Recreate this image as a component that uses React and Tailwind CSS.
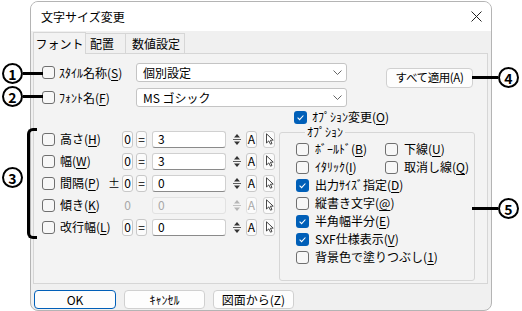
import React from "react";

const FONT = "font-['Noto_Sans_CJK_JP','Noto_Sans',sans-serif]";

function Acc({ children }) {
  return <span className="underline underline-offset-[2px]">{children}</span>;
}

function Check({ checked = false }) {
  if (checked) {
    return (
      <span className="flex items-center justify-center w-[13px] h-[13px] rounded-[3px] bg-[#005fb8] shrink-0">
        <svg width="9" height="9" viewBox="0 0 9 9">
          <path d="M1.6 4.7 L3.6 6.6 L7.4 2.5" fill="none" stroke="white" strokeWidth="1.1" />
        </svg>
      </span>
    );
  }
  return <span className="block w-[13px] h-[13px] rounded-[3px] border border-[#6f6f6f] bg-[#f7f7f7] shrink-0" />;
}

function Chevron() {
  return (
    <svg width="9" height="5" viewBox="0 0 9 5">
      <path d="M0.5 0.5 L4.5 4.5 L8.5 0.5" fill="none" stroke="#555" strokeWidth="0.9" />
    </svg>
  );
}

function Combo({ text }) {
  return (
    <div className="flex items-center justify-between w-[211px] h-[19px] bg-white border border-[#c4c4c4] rounded-[3px] pl-[6px] pr-[4px] text-[12px] leading-none">
      <span>{text}</span>
      <Chevron />
    </div>
  );
}

function Btn({ children, primary = false, className = "" }) {
  return (
    <div
      className={
        "flex items-center justify-center h-[19px] rounded-[4px] bg-[#fdfdfd] leading-none whitespace-nowrap " +
        (primary ? "border-[1.5px] border-[#005fb8] " : "border border-[#d0d0d0] ") +
        className
      }
    >
      {children}
    </div>
  );
}

function Tiny({ children, disabled = false }) {
  return (
    <div
      className={
        "flex items-center justify-center w-[11px] h-[17px] rounded-[3px] border bg-[#fbfbfb] text-[12px] leading-none " +
        (disabled ? "border-[#e0e0e0] text-[#a8a8a8]" : "border-[#c8c8c8] text-black")
      }
    >
      {children}
    </div>
  );
}

function Spinner({ disabled = false }) {
  const c = disabled ? "#b5b5b5" : "#333";
  return (
    <div className="flex items-center justify-center w-[12px] h-[17px]">
      <svg width="10" height="15" viewBox="0 0 10 15">
        <path d="M5 2 L8 5.5 L2 5.5 Z" fill={c} />
        <path d="M1 7.5 L9 7.5" stroke={c} strokeWidth="0.8" />
        <path d="M2 9.5 L8 9.5 L5 13 Z" fill={c} />
      </svg>
    </div>
  );
}

function Pointer() {
  return (
    <div className="flex items-center justify-center w-[12px] h-[17px] rounded-[3px] border border-[#d0d0d0] bg-[#fbfbfb]">
      <svg width="9" height="12" viewBox="0 0 9 12">
        <path d="M1.5 0.8 L1.5 10 L3.8 7.9 L5.5 11.2 L7 10.5 L5.4 7.3 L8.2 7.1 Z" fill="white" stroke="#333" strokeWidth="0.9" strokeLinejoin="round" />
      </svg>
    </div>
  );
}

function ValueRow({ label, acc, pm = false, value, disabled = false }) {
  return (
    <div className="flex items-center h-[22px]">
      <Check />
      <div className="ml-[5px] w-[48px] text-[12px] leading-none whitespace-nowrap">
        {label}(<Acc>{acc}</Acc>)
      </div>
      <div className="w-[14px] text-[12px] leading-none">{pm ? "±" : ""}</div>
      {disabled ? (
        <div className="w-[11px] text-center text-[12px] leading-none text-[#a8a8a8]">0</div>
      ) : (
        <Tiny>0</Tiny>
      )}
      <div className="ml-[3px]">
        {disabled ? <div className="w-[11px] h-[17px]" /> : <Tiny>=</Tiny>}
      </div>
      <div
        className={
          "ml-[5px] flex items-center w-[74px] h-[17px] rounded-[3px] border pl-[5px] text-[12px] leading-none " +
          (disabled
            ? "bg-[#f5f5f5] border-[#e2e2e2] text-[#a8a8a8]"
            : "bg-white border-[#d0d0d0] border-b-[#8a8a8a] text-black")
        }
      >
        {value}
      </div>
      <div className="ml-[5px]">
        <Spinner disabled={disabled} />
      </div>
      <div className="ml-[3px]">
        <Tiny disabled={disabled}>A</Tiny>
      </div>
      <div className="ml-[6px]">
        <Pointer />
      </div>
    </div>
  );
}

function Opt({ checked = false, children, className = "" }) {
  return (
    <div className={"flex items-center h-[18px] " + className}>
      <Check checked={checked} />
      <span className="ml-[6px] text-[12px] leading-none whitespace-nowrap">{children}</span>
    </div>
  );
}

function Circled({ n }) {
  return (
    <div className="flex items-center justify-center w-[21px] h-[21px] rounded-full border-[2px] border-black bg-white text-[14px] font-bold leading-none">
      {n}
    </div>
  );
}

export default function App() {
  return (
    <div className={"relative w-[522px] h-[311px] bg-white overflow-hidden text-black " + FONT}>
      <div className="ml-[30px] mt-[1px] w-[462px] h-[310px] rounded-[8px] border border-[#b4b4b4] bg-[#f0f0f0] flex flex-col overflow-hidden">
        <div className="flex items-center justify-between h-[29px] bg-white pl-[10px] pr-[9px]">
          <span className="text-[12px] leading-none">文字サイズ変更</span>
          <svg width="11" height="11" viewBox="0 0 11 11">
            <path d="M0.5 0.5 L10.5 10.5 M10.5 0.5 L0.5 10.5" stroke="#222" strokeWidth="1" />
          </svg>
        </div>

        <div className="flex items-end h-[22px] pl-[2px] text-[12px] leading-none whitespace-nowrap">
          <div className="relative z-10 flex items-center justify-center h-[22px] -mb-[1px] w-[53px] bg-[#f3f3f3] border border-b-0 border-[#d6d6d6]">
            フォント
          </div>
          <div className="flex items-center h-[20px] w-[40px] pl-[4px] border-t border-r border-[#d6d6d6]">配置</div>
          <div className="flex items-center h-[20px] w-[59px] pl-[6px] border-t border-r border-[#d6d6d6]">数値設定</div>
        </div>

        <div className="ml-[2px] w-[455px] h-[231px] border border-[#d6d6d6] bg-[#f3f3f3] pt-[9px]">
          <div className="flex items-start">
            <div className="flex flex-col gap-[6px] pl-[8px]">
              <div className="flex items-center h-[19px]">
                <Check />
                <span className="ml-[4px] w-[77px] text-[12px] leading-none whitespace-nowrap">
                  ｽﾀｲﾙ名称(<Acc>S</Acc>)
                </span>
                <Combo text="個別設定" />
              </div>
              <div className="flex items-center h-[19px]">
                <Check />
                <span className="ml-[4px] w-[77px] text-[12px] leading-none whitespace-nowrap">
                  ﾌｫﾝﾄ名(<Acc>F</Acc>)
                </span>
                <Combo text="MS ゴシック" />
              </div>
            </div>
            <Btn className="ml-[39px] mt-[5px] w-[87px] h-[20px] text-[11.5px] tracking-[-0.4px]">すべて適用(A)</Btn>
          </div>

          <div className="flex">
            <div className="w-[245px] pt-[21px] pl-[8px]">
              <ValueRow label="高さ" acc="H" value="3" />
              <ValueRow label="幅" acc="W" value="3" />
              <ValueRow label="間隔" acc="P" pm value="0" />
              <ValueRow label="傾き" acc="K" value="0" disabled />
              <ValueRow label="改行幅" acc="L" value="0" />
            </div>
            <div className="w-[196px]">
              <div className="flex items-center h-[18px] mt-[1px] pl-[15px]">
                <Check checked />
                <span className="ml-[5px] text-[12px] leading-none">
                  ｵﾌﾟｼｮﾝ変更(<Acc>O</Acc>)
                </span>
              </div>
              <fieldset className="h-[155px] border border-[#d6d6d6] rounded-[3px] pl-[16px]">
                <legend className="ml-[9px] px-[2px] text-[12px] leading-[12px]">ｵﾌﾟｼｮﾝ</legend>
                <div className="pt-[2px]">
                  <div className="flex">
                    <Opt className="w-[89px]">ﾎﾞｰﾙﾄﾞ(<Acc>B</Acc>)</Opt>
                    <Opt>下線(<Acc>U</Acc>)</Opt>
                  </div>
                  <div className="flex">
                    <Opt className="w-[89px]">ｲﾀﾘｯｸ(<Acc>I</Acc>)</Opt>
                    <Opt>取消し線(<Acc>Q</Acc>)</Opt>
                  </div>
                  <Opt checked>出力ｻｲｽﾞ指定(<Acc>D</Acc>)</Opt>
                  <Opt>縦書き文字(<Acc>@</Acc>)</Opt>
                  <Opt checked>半角幅半分(<Acc>E</Acc>)</Opt>
                  <Opt checked>SXF仕様表示(<Acc>V</Acc>)</Opt>
                  <Opt>背景色で塗りつぶし(<Acc>1</Acc>)</Opt>
                </div>
              </fieldset>
            </div>
          </div>
        </div>

        <div className="flex gap-[8px] pl-[3px] mt-[6px] text-[12px]">
          <Btn primary className="w-[82px]">OK</Btn>
          <Btn className="w-[81px]">ｷｬﾝｾﾙ</Btn>
          <Btn className="w-[81px]">図面から(Z)</Btn>
        </div>
      </div>

      {/* callouts */}
      <div className="absolute left-[2px] top-[63px] flex items-center">
        <Circled n="1" />
        <div className="w-[20px] h-[3px] bg-black" />
      </div>
      <div className="absolute left-[2px] top-[86px] flex items-center">
        <Circled n="2" />
        <div className="w-[20px] h-[3px] bg-black" />
      </div>
      <div className="absolute left-[2px] top-[167px]">
        <Circled n="3" />
      </div>
      <div className="absolute left-[27px] top-[128px] w-[10px] h-[111px] border-[3px] border-r-0 border-black rounded-l-[6px]" />
      <div className="absolute left-[472px] top-[67px] flex items-center">
        <div className="w-[26px] h-[3px] bg-black" />
        <Circled n="4" />
      </div>
      <div className="absolute left-[472px] top-[198px] flex items-center">
        <div className="w-[26px] h-[3px] bg-black" />
        <Circled n="5" />
      </div>
    </div>
  );
}
